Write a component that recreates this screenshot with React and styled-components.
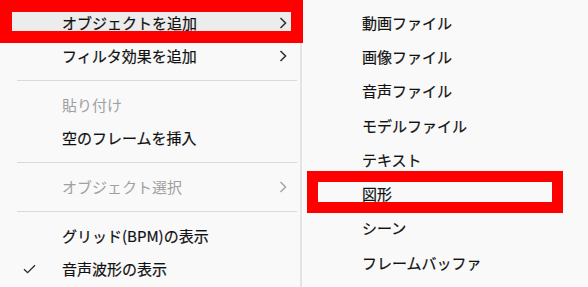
import React from "react";
import styled, { createGlobalStyle } from "styled-components";

const Global = createGlobalStyle`
  html, body { margin: 0; padding: 0; width: 588px; height: 287px; overflow: hidden; background: #f9f9f9; }
  body { font-family: "Noto Sans CJK JP", "Noto Sans", sans-serif; }
`;

const Page = styled.div`
  position: relative;
  display: flex;
  width: 588px;
  height: 287px;
  overflow: hidden;
  background: #f9f9f9;
`;

const Menu = styled.div`
  flex: 0 0 ${(p) => p.$width}px;
  display: flex;
  flex-direction: column;
  padding-top: ${(p) => p.$padTop}px;
  box-sizing: border-box;
  background: #f9f9f9;
`;

const SubMenu = styled(Menu)`
  flex: 1 1 auto;
  border-left: 2px solid #e4e4e4;
`;

const Item = styled.div`
  flex: 0 0 auto;
  display: grid;
  grid-template-columns: ${(p) => p.$indent}px 1fr 26px;
  align-items: center;
  height: ${(p) => p.$h}px;
  margin: 0 4px 0 0;
  font-size: 15px;
  line-height: 1;
  color: ${(p) => (p.$disabled ? "#a0a0a0" : "#111111")};
  -webkit-text-stroke: ${(p) => (p.$disabled ? "0" : "0.2px")};
  background: ${(p) => (p.$active ? "#ececec" : "transparent")};
  white-space: nowrap;
`;

const CheckCell = styled.div`
  display: flex;
  align-items: center;
  padding-left: 23px;
`;

const Label = styled.span`
  display: block;
`;

const ChevronCell = styled.div`
  display: flex;
  justify-content: center;
  align-items: center;
`;

const Separator = styled.div`
  flex: 0 0 16px;
  display: flex;
  align-items: center;
  padding: 0 3px 0 17px;
  &::after {
    content: "";
    flex: 1;
    height: 1px;
    background: #d9d9d9;
  }
`;

const Annotation = styled.div`
  position: absolute;
  left: ${(p) => p.$x}px;
  top: ${(p) => p.$y}px;
  width: ${(p) => p.$w}px;
  height: ${(p) => p.$h}px;
  box-sizing: border-box;
  border: ${(p) => p.$t}px solid #ff0000;
  pointer-events: none;
`;

const Chevron = ({ color }) => (
  <svg width="8" height="12" viewBox="0 0 8 12">
    <path d="M1.5 1 L6.5 6 L1.5 11" fill="none" stroke={color} strokeWidth="1.6" />
  </svg>
);

const Check = () => (
  <svg width="13" height="10" viewBox="0 0 13 10">
    <path d="M1 5.2 L4.6 8.6 L12 1.2" fill="none" stroke="#2a2a2a" strokeWidth="1.3" />
  </svg>
);

const leftItems = [
  { label: "オブジェクトを追加", sub: true, active: true },
  { label: "フィルタ効果を追加", sub: true },
  { sep: true },
  { label: "貼り付け", disabled: true },
  { label: "空のフレームを挿入" },
  { sep: true },
  { label: "オブジェクト選択", sub: true, disabled: true },
  { sep: true },
  { label: "グリッド(BPM)の表示" },
  { label: "音声波形の表示", checked: true },
];

const subItems = [
  "動画ファイル",
  "画像ファイル",
  "音声ファイル",
  "モデルファイル",
  "テキスト",
  "図形",
  "シーン",
  "フレームバッファ",
  "パーティクル出力",
];

export default function App() {
  return (
    <>
      <Global />
      <Page>
        <Menu $width={300} $padTop={6}>
          {leftItems.map((it, i) =>
            it.sep ? (
              <Separator key={i} />
            ) : (
              <Item key={i} $h={33} $indent={62} $disabled={it.disabled} $active={it.active}>
                <CheckCell>{it.checked && <Check />}</CheckCell>
                <Label>{it.label}</Label>
                <ChevronCell>
                  {it.sub && <Chevron color={it.disabled ? "#a8a8a8" : "#333333"} />}
                </ChevronCell>
              </Item>
            )
          )}
        </Menu>
        <SubMenu $width={286} $padTop={5}>
          {subItems.map((s) => (
            <Item key={s} $h={34.3} $indent={60}>
              <CheckCell />
              <Label>{s}</Label>
              <ChevronCell />
            </Item>
          ))}
        </SubMenu>
        <Annotation $x={0} $y={0} $w={303} $h={43} $t={12} />
        <Annotation $x={307} $y={171} $w={256} $h={42} $t={11} />
      </Page>
    </>
  );
}
